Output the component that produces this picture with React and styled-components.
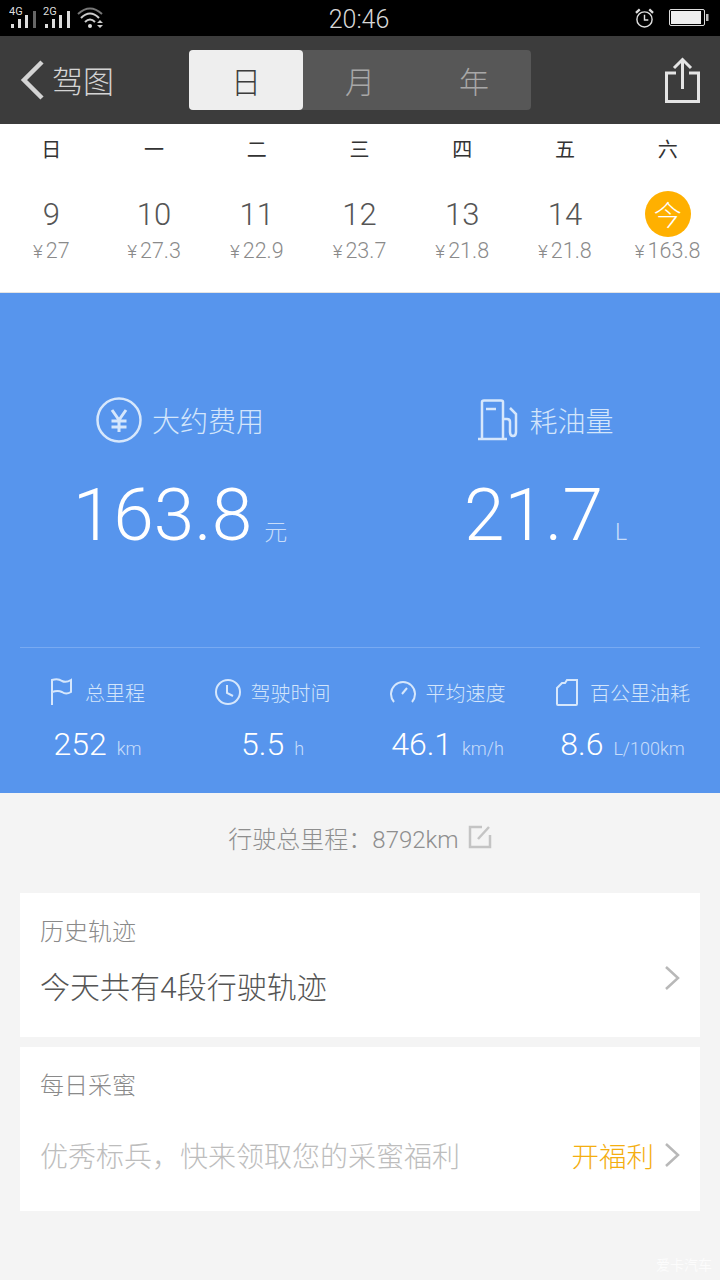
import React from 'react';
import styled, { createGlobalStyle } from 'styled-components';

const GlobalStyle = createGlobalStyle`
  html, body {
    margin: 0;
    padding: 0;
    background: #f4f4f4;
    font-family: Roboto, "Noto Sans CJK SC", sans-serif;
  }
`;

const Page = styled.div`
  width: 720px;
  height: 1280px;
  overflow: hidden;
  position: relative;
  background: #f4f4f4;
`;

const StatusBar = styled.div`
  height: 36px;
  background: #000;
  display: grid;
  grid-template-columns: 1fr auto 1fr;
  align-items: center;
  padding: 0 11px 0 9px;
`;

const StatusGroup = styled.div`
  display: flex;
  align-items: center;
  gap: ${(p) => p.$gap || 0}px;
  justify-content: ${(p) => (p.$end ? 'flex-end' : 'flex-start')};
`;

const Clock = styled.div`
  color: #d8d8d8;
  font-size: 25px;
  font-weight: 300;
  padding-top: 2px;
`;

const NavBar = styled.div`
  height: 88px;
  background: #3c3c3c;
  display: flex;
  align-items: center;
  padding: 0 18px;
  position: relative;
`;

const BackButton = styled.div`
  width: 171px;
  display: flex;
  align-items: center;
  gap: 4px;
  color: #d4d4d4;
  font-size: 31px;
  font-weight: 300;
  line-height: 40px;
`;

const BackTitle = styled.span`
  padding-top: 5px;
`;

const Segments = styled.div`
  width: 342px;
  height: 60px;
  background: #575757;
  border-radius: 4px;
  display: grid;
  grid-template-columns: 114px 114px 114px;
`;

const Segment = styled.div`
  display: flex;
  align-items: center;
  justify-content: center;
  font-size: 30px;
  font-weight: 300;
  border-radius: 4px;
  color: ${(p) => (p.$active ? '#3c3c3c' : '#a8a8a8')};
  background: ${(p) => (p.$active ? '#eeeeee' : 'transparent')};
`;

const ShareButton = styled.div`
  margin-left: auto;
  margin-right: 2px;
  display: flex;
`;

const Week = styled.div`
  height: 169px;
  box-sizing: border-box;
  background: #fff;
  border-bottom: 1px solid #e4e4e4;
  display: grid;
  grid-template-columns: repeat(7, 1fr);
  padding: 14px 1px 0 0;
`;

const DayColumn = styled.div`
  display: flex;
  flex-direction: column;
  align-items: center;
`;

const WeekName = styled.div`
  font-size: 20px;
  line-height: 24px;
  color: #333;
  margin-bottom: 29px;
`;

const DayNumber = styled.div`
  height: 46px;
  display: flex;
  align-items: center;
  justify-content: center;
  font-size: 31px;
  font-weight: 300;
  color: #555;
`;

const TodayBadge = styled.div`
  width: 46px;
  height: 46px;
  border-radius: 50%;
  background: #ffb000;
  color: #fff;
  font-size: 28px;
  font-weight: 300;
  display: flex;
  align-items: center;
  justify-content: center;
`;

const DayCost = styled.div`
  font-size: 21.5px;
  line-height: 24px;
  font-weight: 300;
  color: #8a8a8a;
  margin-top: 2px;
  white-space: nowrap;
`;

const Yen = styled.span`
  font-size: 19px;
  margin-right: 3px;
`;

const BluePanel = styled.div`
  height: 500px;
  background: #5795ed;
  box-sizing: border-box;
  padding: 0 20px;
  display: flex;
  flex-direction: column;
`;

const MainStats = styled.div`
  height: 355px;
  box-sizing: border-box;
  border-bottom: 1px solid #78aaf2;
  display: grid;
  grid-template-columns: 340px 340px;
  padding-top: 99px;
`;

const MainStat = styled.div`
  display: flex;
  flex-direction: column;
  align-items: center;
  padding-left: ${(p) => p.$left || 0}px;
  padding-right: ${(p) => p.$right || 0}px;
`;

const MainLabel = styled.div`
  display: flex;
  align-items: center;
  gap: 10px;
  height: 56px;
  font-size: 28px;
  font-weight: 300;
  color: #d3e5fb;
`;

const MainValue = styled.div`
  display: flex;
  align-items: baseline;
  margin-top: 25px;
  color: #fff;
  font-size: 73px;
  line-height: 84px;
  font-weight: 300;
`;

const MainUnit = styled.span`
  font-size: 23px;
  color: #c8ddfa;
  margin-left: 12px;
`;

const SmallStats = styled.div`
  flex: 1;
  display: grid;
  grid-template-columns: repeat(4, 175px);
  margin-left: -10px;
  padding-top: 27px;
`;

const SmallStat = styled.div`
  display: flex;
  flex-direction: column;
  align-items: center;
`;

const SmallLabel = styled.div`
  display: flex;
  align-items: center;
  gap: ${(p) => p.$gap || 10}px;
  height: 34px;
  font-size: 20px;
  font-weight: 300;
  color: #d3e5fb;
  white-space: nowrap;
`;

const SmallValue = styled.div`
  display: flex;
  align-items: baseline;
  margin-top: 15px;
  font-size: 32px;
  line-height: 40px;
  color: #fff;
  font-weight: 300;
  white-space: nowrap;
`;

const SmallUnit = styled.span`
  font-size: 18px;
  color: #c8ddfa;
  margin-left: 10px;
`;

const Odometer = styled.div`
  height: 100px;
  display: flex;
  align-items: center;
  justify-content: center;
  gap: 9px;
  color: #8e8e8e;
  font-size: 24px;
  font-weight: 300;
  padding-bottom: 12px;
  box-sizing: border-box;
`;

const Card = styled.div`
  margin: 0 20px 10px;
  height: ${(p) => p.$height}px;
  box-sizing: border-box;
  background: #fff;
  padding: 21px 20px 0;
`;

const CardTitle = styled.div`
  font-size: 24px;
  line-height: 36px;
  font-weight: 300;
  color: #8a8a8a;
`;

const CardRow = styled.div`
  display: flex;
  align-items: center;
  height: 48px;
  margin-top: ${(p) => p.$top}px;
`;

const CardText = styled.div`
  flex: 1;
  font-size: ${(p) => (p.$muted ? 28 : 30)}px;
  font-weight: 300;
  color: ${(p) => (p.$muted ? '#bdbdbd' : '#555')};
`;

const Reward = styled.div`
  font-size: 27.5px;
  font-weight: 300;
  color: #f4ae10;
  margin-right: 10px;
`;

const ChevronWrap = styled.div`
  display: flex;
  padding-bottom: ${(p) => p.$raise || 0}px;
`;

const Watermark = styled.div`
  position: absolute;
  right: 8px;
  bottom: 6px;
  font-size: 14px;
  color: #fff;
  opacity: 0.75;
`;

// status bar icons
const SignalIcon = ({ label, dim }) => (
  <svg width="34" height="26" viewBox="0 0 34 26">
    <text x="0" y="10" fontSize="11" fill="#ddd" fontFamily="Roboto">{label}</text>
    <rect x="2" y="19" width="3" height="4" fill="#ddd" />
    <rect x="9" y="14" width="3" height="9" fill="#ddd" />
    <rect x="16" y="10" width="3" height="13" fill="#ddd" />
    <rect x="24" y="6" width="3" height="17" fill={dim ? '#666' : '#ddd'} />
  </svg>
);

const WifiIcon = () => (
  <svg width="28" height="24" viewBox="0 0 28 24" fill="none" stroke="#ccc">
    <path d="M1 8 Q13 -3 25 8" strokeWidth="2" stroke="#777" />
    <path d="M4 12 Q13 3 22 12" strokeWidth="2" />
    <path d="M8 16 Q13 11 18 16" strokeWidth="2" />
    <circle cx="13" cy="20" r="2" fill="#ddd" stroke="none" />
    <path d="M20 17 L23 14 L26 17 Z M20 19 L26 19 L23 22 Z" fill="#ccc" stroke="none" />
  </svg>
);

const AlarmIcon = () => (
  <svg width="19" height="21" viewBox="0 0 20 22" fill="none" stroke="#ddd" strokeWidth="1.5">
    <circle cx="10" cy="12" r="8" />
    <path d="M10 7 V12.5 H14" />
    <path d="M1 5 L5 1.5 M19 5 L15 1.5" strokeWidth="2.5" />
  </svg>
);

const BatteryIcon = () => (
  <svg width="40" height="20" viewBox="0 0 40 20">
    <rect x="0.5" y="1.5" width="35" height="16" rx="1.5" fill="none" stroke="#ddd" />
    <rect x="2" y="3" width="30" height="13" fill="#eee" />
    <rect x="37" y="6" width="2.5" height="7" fill="#bbb" />
  </svg>
);

const BackIcon = () => (
  <svg width="30" height="44" viewBox="0 0 30 44" fill="none" stroke="#d4d4d4" strokeWidth="4.5">
    <path d="M24 4 L6 22 L24 40" />
  </svg>
);

const ShareIcon = () => (
  <svg width="35" height="46" viewBox="0 0 35 46" fill="none" stroke="#e4e4e4" strokeWidth="3">
    <path d="M11 16 H1.5 V44.5 H33.5 V16 H24" />
    <path d="M17.5 32 V3 M9 11 L17.5 2.5 L26 11" />
  </svg>
);

const YuanIcon = () => (
  <svg width="46" height="46" viewBox="0 0 46 46" fill="none" stroke="#d6e7fc">
    <circle cx="23" cy="23" r="21.5" strokeWidth="2.5" />
    <path d="M16 13 L23 23 L30 13 M15.5 24 H30.5 M15.5 30 H30.5 M23 23 V35" strokeWidth="3" />
  </svg>
);

const PumpIcon = () => (
  <svg width="42" height="42" viewBox="0 0 42 42" fill="none" stroke="#d6e7fc" strokeWidth="2.5">
    <path d="M1 40 H30 M5 40 V3 Q5 1.5 7 1.5 H24 Q26 1.5 26 3 V40" />
    <path d="M9 10 H19" />
    <path d="M26 20 H30 Q33 20 33 23 V33 Q33 37 36 37 Q39 37 39 33 V15 L33 9" />
  </svg>
);

const FlagIcon = () => (
  <svg width="24" height="28" viewBox="0 0 24 28" fill="none" stroke="#d6e7fc" strokeWidth="2">
    <path d="M2 27 V2 Q8 0 12 3 Q16 5 21 2 V14 Q16 17 12 14 Q8 12 2 14" />
  </svg>
);

const ClockIcon = () => (
  <svg width="26" height="26" viewBox="0 0 26 26" fill="none" stroke="#d6e7fc" strokeWidth="2">
    <circle cx="13" cy="13" r="12" />
    <path d="M12 6 V14 L18 17" />
  </svg>
);

const GaugeIcon = () => (
  <svg width="26" height="24" viewBox="0 0 26 24" fill="none" stroke="#d6e7fc" strokeWidth="2">
    <path d="M4 22 A12 12 0 1 1 22 22" />
    <path d="M12 14 L17 8" />
  </svg>
);

const CanIcon = () => (
  <svg width="24" height="28" viewBox="0 0 24 28" fill="none" stroke="#d6e7fc" strokeWidth="2">
    <path d="M2 10 L7 5 H10 L12 2 H22 V26 Q22 27 21 27 H3 Q2 27 2 26 Z" />
  </svg>
);

const EditIcon = () => (
  <svg width="24" height="24" viewBox="0 0 24 24" fill="none" stroke="#c4c4c4" strokeWidth="2.5">
    <path d="M14 2 H2 V22 H22 V10" />
    <path d="M10 14 L21 2" />
  </svg>
);

const Chevron = () => (
  <svg width="16" height="26" viewBox="0 0 16 26" fill="none" stroke="#b8b8b8" strokeWidth="2.5">
    <path d="M2 2 L14 13 L2 24" />
  </svg>
);

const days = [
  { name: '日', date: '9', cost: '27' },
  { name: '一', date: '10', cost: '27.3' },
  { name: '二', date: '11', cost: '22.9' },
  { name: '三', date: '12', cost: '23.7' },
  { name: '四', date: '13', cost: '21.8' },
  { name: '五', date: '14', cost: '21.8' },
  { name: '六', date: '今', cost: '163.8', today: true },
];

const smallStats = [
  { icon: <FlagIcon />, label: '总里程', value: '252', unit: 'km', gap: 11 },
  { icon: <ClockIcon />, label: '驾驶时间', value: '5.5', unit: 'h', gap: 10 },
  { icon: <GaugeIcon />, label: '平均速度', value: '46.1', unit: 'km/h', gap: 10 },
  { icon: <CanIcon />, label: '百公里油耗', value: '8.6', unit: 'L/100km', gap: 11 },
];

export default function App() {
  return (
    <Page>
      <GlobalStyle />
      <StatusBar>
        <StatusGroup $gap={0}>
          <SignalIcon label="4G" dim />
          <SignalIcon label="2G" />
          <WifiIcon />
        </StatusGroup>
        <Clock>20:46</Clock>
        <StatusGroup $end $gap={15}>
          <AlarmIcon />
          <BatteryIcon />
        </StatusGroup>
      </StatusBar>

      <NavBar>
        <BackButton>
          <BackIcon />
          <BackTitle>驾图</BackTitle>
        </BackButton>
        <Segments>
          <Segment $active>日</Segment>
          <Segment>月</Segment>
          <Segment>年</Segment>
        </Segments>
        <ShareButton>
          <ShareIcon />
        </ShareButton>
      </NavBar>

      <Week>
        {days.map((d) => (
          <DayColumn key={d.name}>
            <WeekName>{d.name}</WeekName>
            {d.today ? <TodayBadge>{d.date}</TodayBadge> : <DayNumber>{d.date}</DayNumber>}
            <DayCost><Yen>¥</Yen>{d.cost}</DayCost>
          </DayColumn>
        ))}
      </Week>

      <BluePanel>
        <MainStats>
          <MainStat $right={20}>
            <MainLabel>
              <YuanIcon />
              大约费用
            </MainLabel>
            <MainValue>
              163.8<MainUnit>元</MainUnit>
            </MainValue>
          </MainStat>
          <MainStat $left={31}>
            <MainLabel>
              <PumpIcon />
              耗油量
            </MainLabel>
            <MainValue>
              21.7<MainUnit>L</MainUnit>
            </MainValue>
          </MainStat>
        </MainStats>
        <SmallStats>
          {smallStats.map((s) => (
            <SmallStat key={s.label}>
              <SmallLabel $gap={s.gap}>
                {s.icon}
                {s.label}
              </SmallLabel>
              <SmallValue>
                {s.value}
                <SmallUnit>{s.unit}</SmallUnit>
              </SmallValue>
            </SmallStat>
          ))}
        </SmallStats>
      </BluePanel>

      <Odometer>
        行驶总里程：8792km
        <EditIcon />
      </Odometer>

      <Card $height={144}>
        <CardTitle>历史轨迹</CardTitle>
        <CardRow $top={11}>
          <CardText>今天共有4段行驶轨迹</CardText>
          <ChevronWrap $raise={14}>
            <Chevron />
          </ChevronWrap>
        </CardRow>
      </Card>
      <Card $height={164}>
        <CardTitle>每日采蜜</CardTitle>
        <CardRow $top={27}>
          <CardText $muted>优秀标兵，快来领取您的采蜜福利</CardText>
          <Reward>开福利</Reward>
          <Chevron />
        </CardRow>
      </Card>
      <Watermark>爱卡汽车</Watermark>
    </Page>
  );
}
